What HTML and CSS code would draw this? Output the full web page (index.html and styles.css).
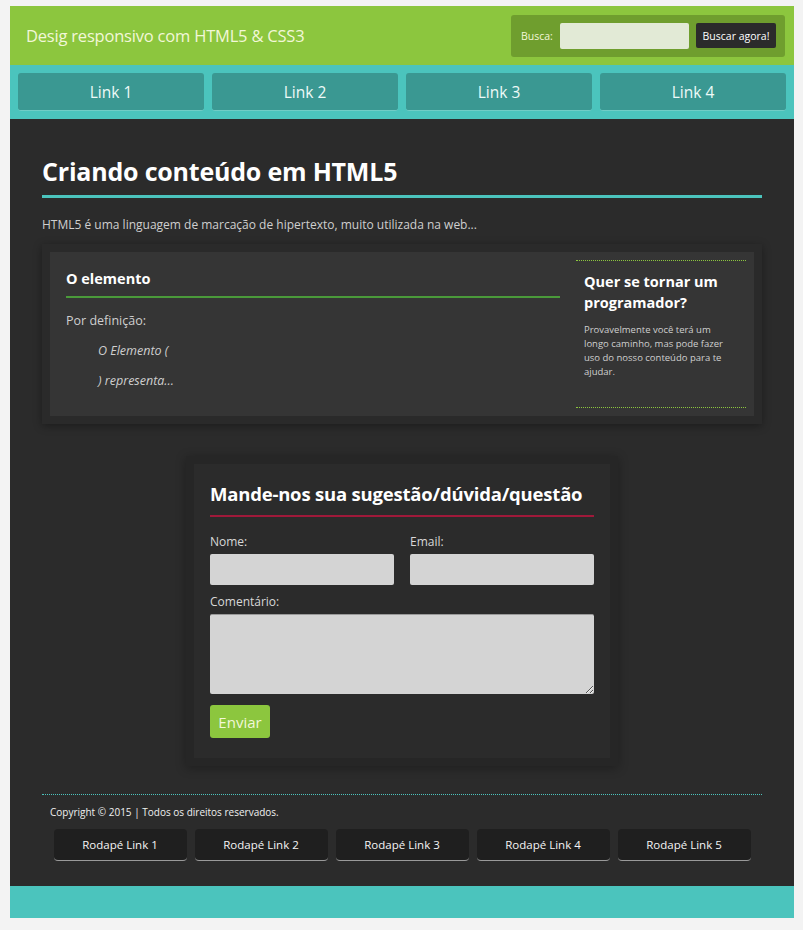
FILE: index.html
```html
<!DOCTYPE html>
<html lang="pt-BR">
<head>
<meta charset="utf-8">
<title>Desig responsivo com HTML5 &amp; CSS3</title>
<link rel="stylesheet" href="styles.css">
</head>
<body>
<div class="page">
  <header class="top">
    <div class="brand">Desig responsivo com HTML5 &amp; CSS3</div>
    <form class="search">
      <label class="search-label">Busca:</label>
      <input class="search-input" type="text">
      <button class="search-btn" type="button">Buscar agora!</button>
    </form>
  </header>
  <nav class="nav">
    <a class="nav-link">Link 1</a>
    <a class="nav-link">Link 2</a>
    <a class="nav-link">Link 3</a>
    <a class="nav-link">Link 4</a>
  </nav>
  <main class="main">
    <h1 class="title">Criando conteúdo em HTML5</h1>
    <p class="intro">HTML5 é uma linguagem de marcação de hipertexto, muito utilizada na web...</p>
    <div class="article-wrap">
      <div class="article">
        <section class="section">
          <h2 class="section-title">O elemento</h2>
          <p class="def">Por definição:</p>
          <blockquote class="quote">
            <p class="quote-line">O Elemento (</p>
            <p class="quote-line">) representa...</p>
          </blockquote>
        </section>
        <aside class="aside">
          <h3 class="aside-title">Quer se tornar um programador?</h3>
          <p class="aside-text">Provavelmente você terá um longo caminho, mas pode fazer uso do nosso conteúdo para te ajudar.</p>
        </aside>
      </div>
    </div>
    <div class="form-wrap">
      <form class="contact">
        <h2 class="contact-title">Mande-nos sua sugestão/dúvida/questão</h2>
        <div class="row">
          <div class="field">
            <label class="lbl">Nome:</label>
            <input class="inp" type="text">
          </div>
          <div class="field">
            <label class="lbl">Email:</label>
            <input class="inp" type="text">
          </div>
        </div>
        <label class="lbl lbl-comment">Comentário:</label>
        <textarea class="txt"></textarea>
        <button class="send" type="button">Enviar</button>
      </form>
    </div>
    <footer class="footer">
      <p class="copy">Copyright © 2015 | Todos os direitos reservados.</p>
      <div class="foot-links">
        <a class="foot-link">Rodapé Link 1</a>
        <a class="foot-link">Rodapé Link 2</a>
        <a class="foot-link">Rodapé Link 3</a>
        <a class="foot-link">Rodapé Link 4</a>
        <a class="foot-link">Rodapé Link 5</a>
      </div>
    </footer>
  </main>
  <div class="band"></div>
</div>
</body>
</html>
```
FILE: styles.css
```css
* { box-sizing: border-box; }
html, body { margin: 0; padding: 0; }
body {
  background: #f3f3f3;
  font-family: "Open Sans", "Noto Sans", sans-serif;
  color: #ddd;
}
.page {
  width: 784px;
  margin: 6px 0 0 10px;
}
.top {
  height: 59px;
  background: #8cc63e;
  display: flex;
  align-items: center;
  justify-content: space-between;
  padding: 0 9px 0 16px;
}
.brand {
  color: #f2f7d8;
  font-size: 16.5px;
  letter-spacing: -0.2px;
}
.search {
  width: 274px;
  height: 42px;
  background: #6f9e2e;
  border-radius: 3px;
  display: flex;
  align-items: center;
  padding: 0 9px 0 10px;
}
.search-label {
  font-size: 10.5px;
  color: #f2f7d8;
  width: 39px;
}
.search-input {
  width: 129px;
  height: 26px;
  border: none;
  border-radius: 2px;
  background: #e2ead6;
  margin: 0;
}
.search-btn {
  margin-left: 7px;
  width: 80px;
  height: 25px;
  border: none;
  border-radius: 2px;
  background: #2b2b2b;
  color: #fff;
  font-family: inherit;
  font-size: 10.5px;
  padding: 0;
}
.nav {
  background: #4bc4bd;
  padding: 8px;
  display: grid;
  grid-template-columns: repeat(4, 1fr);
  gap: 8px;
}
.nav-link {
  height: 38px;
  background: #3a9892;
  border-radius: 3px;
  border-bottom: 1px solid #6fcdc6;
  color: #eefaf8;
  font-size: 15.5px;
  display: flex;
  align-items: center;
  justify-content: center;
}
.main {
  background: #2b2b2b;
  padding: 34px 32px 25px;
}
.title {
  margin: 0;
  font-size: 25px;
  line-height: 36px;
  font-weight: 700;
  color: #fff;
  padding-bottom: 6px;
  border-bottom: 3px solid #4bc4bd;
  letter-spacing: -0.2px;
}
.intro {
  margin: 18px 0 0;
  font-size: 12px;
  line-height: 18px;
  color: #cfcfcf;
}
.article-wrap {
  margin-top: 10px;
  padding: 8px;
  background: #2a2a2a;
  box-shadow: 0 2px 8px rgba(0, 0, 0, 0.35);
}
.article {
  background: #353535;
  display: flex;
  height: 164px;
}
.section {
  width: 526px;
  padding: 17px 16px 0;
}
.section-title {
  margin: 0;
  font-size: 14.5px;
  line-height: 20px;
  font-weight: 700;
  color: #fff;
  padding-bottom: 7px;
  border-bottom: 2px solid #4a9a3a;
}
.def {
  margin: 14px 0 0;
  font-size: 12.5px;
  line-height: 18px;
  color: #cfcfcf;
}
.quote {
  margin: 0 0 0 32px;
}
.quote-line {
  margin: 12px 0 0;
  font-size: 12.5px;
  line-height: 18px;
  font-style: italic;
  color: #cfcfcf;
}
.aside {
  width: 170px;
  margin: 8px 0 8px;
  border-top: 1px dotted #8cc63e;
  border-bottom: 1px dotted #8cc63e;
  padding: 10px 12px 0 8px;
}
.aside-title {
  margin: 0;
  font-size: 14.5px;
  line-height: 21px;
  font-weight: 700;
  color: #fff;
}
.aside-text {
  margin: 10px 0 0;
  font-size: 9.5px;
  line-height: 14px;
  color: #cfcfcf;
}
.form-wrap {
  width: 432px;
  margin: 32px auto 0;
  padding: 8px;
  background: #262626;
  box-shadow: 0 2px 10px rgba(0, 0, 0, 0.3);
}
.contact {
  background: #2b2b2b;
  padding: 17px 16px 20px;
  display: flex;
  flex-direction: column;
  align-items: flex-start;
}
.contact-title {
  margin: 0;
  align-self: stretch;
  font-size: 18.5px;
  line-height: 26px;
  font-weight: 700;
  color: #fff;
  padding-bottom: 8px;
  border-bottom: 2px solid #a0193a;
  letter-spacing: -0.2px;
}
.row {
  align-self: stretch;
  display: grid;
  grid-template-columns: 1fr 1fr;
  gap: 16px;
  margin-top: 17px;
}
.field {
  display: flex;
  flex-direction: column;
}
.lbl {
  font-size: 12px;
  line-height: 16px;
  color: #d8d8d8;
  margin-bottom: 4px;
}
.lbl-comment {
  margin-top: 9px;
}
.inp {
  height: 31px;
  border: none;
  border-radius: 2px;
  background: #d4d4d4;
  margin: 0;
}
.txt {
  align-self: stretch;
  height: 80px;
  border: none;
  border-top: 1px solid #999;
  border-radius: 2px;
  background: #d4d4d4;
  margin: 0;
  resize: vertical;
}
.send {
  margin-top: 11px;
  width: 60px;
  height: 33px;
  border: none;
  border-radius: 3px;
  background: #8cc63e;
  color: #f2f7d8;
  font-family: inherit;
  font-size: 15px;
  padding: 0;
}
.footer {
  margin-top: 28px;
  border-top: 1px dotted #4bc4bd;
}
.copy {
  margin: 10px 0 0 8px;
  font-size: 10px;
  line-height: 14px;
  color: #f0f0f0;
}
.foot-links {
  margin-top: 10px;
  display: flex;
  justify-content: center;
  gap: 8px;
}
.foot-link {
  width: 133px;
  height: 32px;
  background: #1f1f1f;
  border-radius: 4px;
  border-bottom: 1px solid #9a9a9a;
  color: #f4f4f4;
  font-size: 11.5px;
  display: flex;
  align-items: center;
  justify-content: center;
}
.band {
  height: 32px;
  background: #4bc4bd;
}
```
